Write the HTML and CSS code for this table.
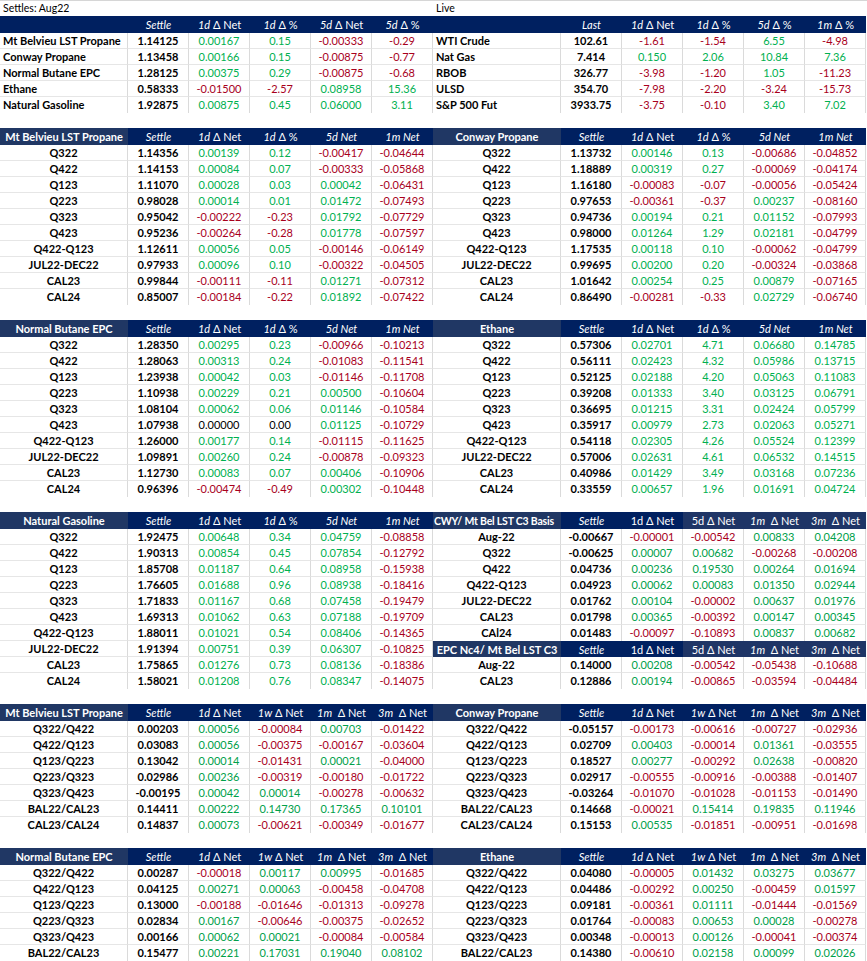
FILE: index.html
```html
<!DOCTYPE html>
<html lang="en">
<head>
<meta charset="utf-8">
<title>Settles</title>
<link rel="stylesheet" href="styles.css">
</head>
<body>
<div class="sheet">
  <div class="titles">
    <div class="title">Settles: Aug22</div>
    <div class="title">Live</div>
  </div>

  <div class="section">
    <table class="grid summary">
      <colgroup><col class="c-name"><col><col><col><col><col></colgroup>
      <thead><tr><th class="blank"></th><th><i>Settle</i></th><th><i>1d</i> Δ Net</th><th><i>1d</i> Δ %</th><th><i>5d</i> Δ Net</th><th><i>5d</i> Δ %</th></tr></thead>
      <tbody>
        <tr><td class="name">Mt Belvieu LST Propane</td><td class="s">1.14125</td><td class="g">0.00167</td><td class="g">0.15</td><td class="r">-0.00333</td><td class="r">-0.29</td></tr>
        <tr><td class="name">Conway Propane</td><td class="s">1.13458</td><td class="g">0.00166</td><td class="g">0.15</td><td class="r">-0.00875</td><td class="r">-0.77</td></tr>
        <tr><td class="name">Normal Butane EPC</td><td class="s">1.28125</td><td class="g">0.00375</td><td class="g">0.29</td><td class="r">-0.00875</td><td class="r">-0.68</td></tr>
        <tr><td class="name">Ethane</td><td class="s">0.58333</td><td class="r">-0.01500</td><td class="r">-2.57</td><td class="g">0.08958</td><td class="g">15.36</td></tr>
        <tr><td class="name">Natural Gasoline</td><td class="s">1.92875</td><td class="g">0.00875</td><td class="g">0.45</td><td class="g">0.06000</td><td class="g">3.11</td></tr>
      </tbody>
    </table>
    <table class="grid summary">
      <colgroup><col class="c-name"><col><col><col><col><col></colgroup>
      <thead><tr><th class="blank"></th><th><i>Last</i></th><th><i>1d</i> Δ Net</th><th><i>1d</i> Δ %</th><th><i>5d</i> Δ %</th><th><i>1m</i> Δ %</th></tr></thead>
      <tbody>
        <tr><td class="name">WTI Crude</td><td class="s">102.61</td><td class="r">-1.61</td><td class="r">-1.54</td><td class="g">6.55</td><td class="r">-4.98</td></tr>
        <tr><td class="name">Nat Gas</td><td class="s">7.414</td><td class="g">0.150</td><td class="g">2.06</td><td class="g">10.84</td><td class="g">7.36</td></tr>
        <tr><td class="name">RBOB</td><td class="s">326.77</td><td class="r">-3.98</td><td class="r">-1.20</td><td class="g">1.05</td><td class="r">-11.23</td></tr>
        <tr><td class="name">ULSD</td><td class="s">354.70</td><td class="r">-7.98</td><td class="r">-2.20</td><td class="r">-3.24</td><td class="r">-15.73</td></tr>
        <tr><td class="name">S&amp;P 500 Fut</td><td class="s">3933.75</td><td class="r">-3.75</td><td class="r">-0.10</td><td class="g">3.40</td><td class="g">7.02</td></tr>
      </tbody>
    </table>
  </div>

  <div class="section">
    <table class="grid">
      <colgroup><col class="c-name"><col><col><col><col><col></colgroup>
      <thead><tr><th class="lbl">Mt Belvieu LST Propane</th><th><i>Settle</i></th><th><i>1d</i> Δ Net</th><th><i>1d</i> Δ %</th><th><i>5d Net</i></th><th><i>1m Net</i></th></tr></thead>
      <tbody>
        <tr><td class="k">Q322</td><td class="s">1.14356</td><td class="g">0.00139</td><td class="g">0.12</td><td class="r">-0.00417</td><td class="r">-0.04644</td></tr>
        <tr><td class="k">Q422</td><td class="s">1.14153</td><td class="g">0.00084</td><td class="g">0.07</td><td class="r">-0.00333</td><td class="r">-0.05868</td></tr>
        <tr><td class="k">Q123</td><td class="s">1.11070</td><td class="g">0.00028</td><td class="g">0.03</td><td class="g">0.00042</td><td class="r">-0.06431</td></tr>
        <tr><td class="k">Q223</td><td class="s">0.98028</td><td class="g">0.00014</td><td class="g">0.01</td><td class="g">0.01472</td><td class="r">-0.07493</td></tr>
        <tr><td class="k">Q323</td><td class="s">0.95042</td><td class="r">-0.00222</td><td class="r">-0.23</td><td class="g">0.01792</td><td class="r">-0.07729</td></tr>
        <tr><td class="k">Q423</td><td class="s">0.95236</td><td class="r">-0.00264</td><td class="r">-0.28</td><td class="g">0.01778</td><td class="r">-0.07597</td></tr>
        <tr><td class="k">Q422-Q123</td><td class="s">1.12611</td><td class="g">0.00056</td><td class="g">0.05</td><td class="r">-0.00146</td><td class="r">-0.06149</td></tr>
        <tr><td class="k">JUL22-DEC22</td><td class="s">0.97933</td><td class="g">0.00096</td><td class="g">0.10</td><td class="r">-0.00322</td><td class="r">-0.04505</td></tr>
        <tr><td class="k">CAL23</td><td class="s">0.99844</td><td class="r">-0.00111</td><td class="r">-0.11</td><td class="g">0.01271</td><td class="r">-0.07312</td></tr>
        <tr><td class="k">CAL24</td><td class="s">0.85007</td><td class="r">-0.00184</td><td class="r">-0.22</td><td class="g">0.01892</td><td class="r">-0.07422</td></tr>
      </tbody>
    </table>
    <table class="grid">
      <colgroup><col class="c-name"><col><col><col><col><col></colgroup>
      <thead><tr><th class="lbl">Conway Propane</th><th><i>Settle</i></th><th><i>1d</i> Δ Net</th><th><i>1d</i> Δ %</th><th><i>5d Net</i></th><th><i>1m Net</i></th></tr></thead>
      <tbody>
        <tr><td class="k">Q322</td><td class="s">1.13732</td><td class="g">0.00146</td><td class="g">0.13</td><td class="r">-0.00686</td><td class="r">-0.04852</td></tr>
        <tr><td class="k">Q422</td><td class="s">1.18889</td><td class="g">0.00319</td><td class="g">0.27</td><td class="r">-0.00069</td><td class="r">-0.04174</td></tr>
        <tr><td class="k">Q123</td><td class="s">1.16180</td><td class="r">-0.00083</td><td class="r">-0.07</td><td class="r">-0.00056</td><td class="r">-0.05424</td></tr>
        <tr><td class="k">Q223</td><td class="s">0.97653</td><td class="r">-0.00361</td><td class="r">-0.37</td><td class="g">0.00237</td><td class="r">-0.08160</td></tr>
        <tr><td class="k">Q323</td><td class="s">0.94736</td><td class="g">0.00194</td><td class="g">0.21</td><td class="g">0.01152</td><td class="r">-0.07993</td></tr>
        <tr><td class="k">Q423</td><td class="s">0.98000</td><td class="g">0.01264</td><td class="g">1.29</td><td class="g">0.02181</td><td class="r">-0.04799</td></tr>
        <tr><td class="k">Q422-Q123</td><td class="s">1.17535</td><td class="g">0.00118</td><td class="g">0.10</td><td class="r">-0.00062</td><td class="r">-0.04799</td></tr>
        <tr><td class="k">JUL22-DEC22</td><td class="s">0.99695</td><td class="g">0.00200</td><td class="g">0.20</td><td class="r">-0.00324</td><td class="r">-0.03868</td></tr>
        <tr><td class="k">CAL23</td><td class="s">1.01642</td><td class="g">0.00254</td><td class="g">0.25</td><td class="g">0.00879</td><td class="r">-0.07165</td></tr>
        <tr><td class="k">CAL24</td><td class="s">0.86490</td><td class="r">-0.00281</td><td class="r">-0.33</td><td class="g">0.02729</td><td class="r">-0.06740</td></tr>
      </tbody>
    </table>
  </div>

  <div class="section">
    <table class="grid">
      <colgroup><col class="c-name"><col><col><col><col><col></colgroup>
      <thead><tr><th class="lbl">Normal Butane EPC</th><th><i>Settle</i></th><th><i>1d</i> Δ Net</th><th><i>1d</i> Δ %</th><th><i>5d Net</i></th><th><i>1m Net</i></th></tr></thead>
      <tbody>
        <tr><td class="k">Q322</td><td class="s">1.28350</td><td class="g">0.00295</td><td class="g">0.23</td><td class="r">-0.00966</td><td class="r">-0.10213</td></tr>
        <tr><td class="k">Q422</td><td class="s">1.28063</td><td class="g">0.00313</td><td class="g">0.24</td><td class="r">-0.01083</td><td class="r">-0.11541</td></tr>
        <tr><td class="k">Q123</td><td class="s">1.23938</td><td class="g">0.00042</td><td class="g">0.03</td><td class="r">-0.01146</td><td class="r">-0.11708</td></tr>
        <tr><td class="k">Q223</td><td class="s">1.10938</td><td class="g">0.00229</td><td class="g">0.21</td><td class="g">0.00500</td><td class="r">-0.10604</td></tr>
        <tr><td class="k">Q323</td><td class="s">1.08104</td><td class="g">0.00062</td><td class="g">0.06</td><td class="g">0.01146</td><td class="r">-0.10584</td></tr>
        <tr><td class="k">Q423</td><td class="s">1.07938</td><td class="z">0.00000</td><td class="z">0.00</td><td class="g">0.01125</td><td class="r">-0.10729</td></tr>
        <tr><td class="k">Q422-Q123</td><td class="s">1.26000</td><td class="g">0.00177</td><td class="g">0.14</td><td class="r">-0.01115</td><td class="r">-0.11625</td></tr>
        <tr><td class="k">JUL22-DEC22</td><td class="s">1.09891</td><td class="g">0.00260</td><td class="g">0.24</td><td class="r">-0.00878</td><td class="r">-0.09323</td></tr>
        <tr><td class="k">CAL23</td><td class="s">1.12730</td><td class="g">0.00083</td><td class="g">0.07</td><td class="g">0.00406</td><td class="r">-0.10906</td></tr>
        <tr><td class="k">CAL24</td><td class="s">0.96396</td><td class="r">-0.00474</td><td class="r">-0.49</td><td class="g">0.00302</td><td class="r">-0.10448</td></tr>
      </tbody>
    </table>
    <table class="grid">
      <colgroup><col class="c-name"><col><col><col><col><col></colgroup>
      <thead><tr><th class="lbl">Ethane</th><th><i>Settle</i></th><th><i>1d</i> Δ Net</th><th><i>1d</i> Δ %</th><th><i>5d Net</i></th><th><i>1m Net</i></th></tr></thead>
      <tbody>
        <tr><td class="k">Q322</td><td class="s">0.57306</td><td class="g">0.02701</td><td class="g">4.71</td><td class="g">0.06680</td><td class="g">0.14785</td></tr>
        <tr><td class="k">Q422</td><td class="s">0.56111</td><td class="g">0.02423</td><td class="g">4.32</td><td class="g">0.05986</td><td class="g">0.13715</td></tr>
        <tr><td class="k">Q123</td><td class="s">0.52125</td><td class="g">0.02188</td><td class="g">4.20</td><td class="g">0.05063</td><td class="g">0.11083</td></tr>
        <tr><td class="k">Q223</td><td class="s">0.39208</td><td class="g">0.01333</td><td class="g">3.40</td><td class="g">0.03125</td><td class="g">0.06791</td></tr>
        <tr><td class="k">Q323</td><td class="s">0.36695</td><td class="g">0.01215</td><td class="g">3.31</td><td class="g">0.02424</td><td class="g">0.05799</td></tr>
        <tr><td class="k">Q423</td><td class="s">0.35917</td><td class="g">0.00979</td><td class="g">2.73</td><td class="g">0.02063</td><td class="g">0.05271</td></tr>
        <tr><td class="k">Q422-Q123</td><td class="s">0.54118</td><td class="g">0.02305</td><td class="g">4.26</td><td class="g">0.05524</td><td class="g">0.12399</td></tr>
        <tr><td class="k">JUL22-DEC22</td><td class="s">0.57006</td><td class="g">0.02631</td><td class="g">4.61</td><td class="g">0.06532</td><td class="g">0.14515</td></tr>
        <tr><td class="k">CAL23</td><td class="s">0.40986</td><td class="g">0.01429</td><td class="g">3.49</td><td class="g">0.03168</td><td class="g">0.07236</td></tr>
        <tr><td class="k">CAL24</td><td class="s">0.33559</td><td class="g">0.00657</td><td class="g">1.96</td><td class="g">0.01691</td><td class="g">0.04724</td></tr>
      </tbody>
    </table>
  </div>

  <div class="section">
    <table class="grid">
      <colgroup><col class="c-name"><col><col><col><col><col></colgroup>
      <thead><tr><th class="lbl">Natural Gasoline</th><th><i>Settle</i></th><th><i>1d</i> Δ Net</th><th><i>1d</i> Δ %</th><th><i>5d Net</i></th><th><i>1m Net</i></th></tr></thead>
      <tbody>
        <tr><td class="k">Q322</td><td class="s">1.92475</td><td class="g">0.00648</td><td class="g">0.34</td><td class="g">0.04759</td><td class="r">-0.08858</td></tr>
        <tr><td class="k">Q422</td><td class="s">1.90313</td><td class="g">0.00854</td><td class="g">0.45</td><td class="g">0.07854</td><td class="r">-0.12792</td></tr>
        <tr><td class="k">Q123</td><td class="s">1.85708</td><td class="g">0.01187</td><td class="g">0.64</td><td class="g">0.08958</td><td class="r">-0.15938</td></tr>
        <tr><td class="k">Q223</td><td class="s">1.76605</td><td class="g">0.01688</td><td class="g">0.96</td><td class="g">0.08938</td><td class="r">-0.18416</td></tr>
        <tr><td class="k">Q323</td><td class="s">1.71833</td><td class="g">0.01167</td><td class="g">0.68</td><td class="g">0.07458</td><td class="r">-0.19479</td></tr>
        <tr><td class="k">Q423</td><td class="s">1.69313</td><td class="g">0.01062</td><td class="g">0.63</td><td class="g">0.07188</td><td class="r">-0.19709</td></tr>
        <tr><td class="k">Q422-Q123</td><td class="s">1.88011</td><td class="g">0.01021</td><td class="g">0.54</td><td class="g">0.08406</td><td class="r">-0.14365</td></tr>
        <tr><td class="k">JUL22-DEC22</td><td class="s">1.91394</td><td class="g">0.00751</td><td class="g">0.39</td><td class="g">0.06307</td><td class="r">-0.10825</td></tr>
        <tr><td class="k">CAL23</td><td class="s">1.75865</td><td class="g">0.01276</td><td class="g">0.73</td><td class="g">0.08136</td><td class="r">-0.18386</td></tr>
        <tr><td class="k">CAL24</td><td class="s">1.58021</td><td class="g">0.01208</td><td class="g">0.76</td><td class="g">0.08347</td><td class="r">-0.14075</td></tr>
      </tbody>
    </table>
    <div class="stack">
      <table class="grid dark">
        <colgroup><col class="c-name"><col><col><col><col><col></colgroup>
        <thead><tr><th class="lbl left">CWY/ Mt Bel LST C3 Basis</th><th><i>Settle</i></th><th>1d Δ Net</th><th class="alt">5d Δ Net</th><th class="alt"><i>1m</i>&nbsp; Δ Net</th><th class="alt"><i>3m</i>&nbsp; Δ Net</th></tr></thead>
        <tbody>
          <tr><td class="k">Aug-22</td><td class="s">-0.00667</td><td class="r">-0.00001</td><td class="r">-0.00542</td><td class="g">0.00833</td><td class="g">0.04208</td></tr>
          <tr><td class="k">Q322</td><td class="s">-0.00625</td><td class="g">0.00007</td><td class="g">0.00682</td><td class="r">-0.00268</td><td class="r">-0.00208</td></tr>
          <tr><td class="k">Q422</td><td class="s">0.04736</td><td class="g">0.00236</td><td class="g">0.19530</td><td class="g">0.00264</td><td class="g">0.01694</td></tr>
          <tr><td class="k">Q422-Q123</td><td class="s">0.04923</td><td class="g">0.00062</td><td class="g">0.00083</td><td class="g">0.01350</td><td class="g">0.02944</td></tr>
          <tr><td class="k">JUL22-DEC22</td><td class="s">0.01762</td><td class="g">0.00104</td><td class="r">-0.00002</td><td class="g">0.00637</td><td class="g">0.01976</td></tr>
          <tr><td class="k">CAL23</td><td class="s">0.01798</td><td class="g">0.00365</td><td class="r">-0.00392</td><td class="g">0.00147</td><td class="g">0.00345</td></tr>
          <tr><td class="k">CAl24</td><td class="s">0.01483</td><td class="r">-0.00097</td><td class="r">-0.10893</td><td class="g">0.00837</td><td class="g">0.00682</td></tr>
        </tbody>
      </table>
      <table class="grid dark sub">
        <colgroup><col class="c-name"><col><col><col><col><col></colgroup>
        <thead><tr><th class="lbl">EPC Nc4/ Mt Bel LST C3</th><th><i>Settle</i></th><th>1d Δ Net</th><th class="alt">5d Δ Net</th><th class="alt"><i>1m</i>&nbsp; Δ Net</th><th class="alt"><i>3m</i>&nbsp; Δ Net</th></tr></thead>
        <tbody>
          <tr><td class="k">Aug-22</td><td class="s">0.14000</td><td class="g">0.00208</td><td class="r">-0.00542</td><td class="r">-0.05438</td><td class="r">-0.10688</td></tr>
          <tr><td class="k">CAL23</td><td class="s">0.12886</td><td class="g">0.00194</td><td class="r">-0.00865</td><td class="r">-0.03594</td><td class="r">-0.04484</td></tr>
        </tbody>
      </table>
    </div>
  </div>

  <div class="section">
    <table class="grid dark">
      <colgroup><col class="c-name"><col><col><col><col><col></colgroup>
      <thead><tr><th class="lbl">Mt Belvieu LST Propane</th><th><i>Settle</i></th><th><i>1d</i> Δ Net</th><th><i>1w</i> Δ Net</th><th><i>1m</i>&nbsp; Δ Net</th><th><i>3m</i>&nbsp; Δ Net</th></tr></thead>
      <tbody>
        <tr><td class="k">Q322/Q422</td><td class="s">0.00203</td><td class="g">0.00056</td><td class="r">-0.00084</td><td class="g">0.00703</td><td class="r">-0.01422</td></tr>
        <tr><td class="k">Q422/Q123</td><td class="s">0.03083</td><td class="g">0.00056</td><td class="r">-0.00375</td><td class="r">-0.00167</td><td class="r">-0.03604</td></tr>
        <tr><td class="k">Q123/Q223</td><td class="s">0.13042</td><td class="g">0.00014</td><td class="r">-0.01431</td><td class="g">0.00021</td><td class="r">-0.04000</td></tr>
        <tr><td class="k">Q223/Q323</td><td class="s">0.02986</td><td class="g">0.00236</td><td class="r">-0.00319</td><td class="r">-0.00180</td><td class="r">-0.01722</td></tr>
        <tr><td class="k">Q323/Q423</td><td class="s">-0.00195</td><td class="g">0.00042</td><td class="g">0.00014</td><td class="r">-0.00278</td><td class="r">-0.00632</td></tr>
        <tr><td class="k">BAL22/CAL23</td><td class="s">0.14411</td><td class="g">0.00222</td><td class="g">0.14730</td><td class="g">0.17365</td><td class="g">0.10101</td></tr>
        <tr><td class="k">CAL23/CAL24</td><td class="s">0.14837</td><td class="g">0.00073</td><td class="r">-0.00621</td><td class="r">-0.00349</td><td class="r">-0.01677</td></tr>
      </tbody>
    </table>
    <table class="grid dark">
      <colgroup><col class="c-name"><col><col><col><col><col></colgroup>
      <thead><tr><th class="lbl">Conway Propane</th><th><i>Settle</i></th><th><i>1d</i> Δ Net</th><th><i>1w</i> Δ Net</th><th><i>1m</i>&nbsp; Δ Net</th><th><i>3m</i>&nbsp; Δ Net</th></tr></thead>
      <tbody>
        <tr><td class="k">Q322/Q422</td><td class="s">-0.05157</td><td class="r">-0.00173</td><td class="r">-0.00616</td><td class="r">-0.00727</td><td class="r">-0.02936</td></tr>
        <tr><td class="k">Q422/Q123</td><td class="s">0.02709</td><td class="g">0.00403</td><td class="r">-0.00014</td><td class="g">0.01361</td><td class="r">-0.03555</td></tr>
        <tr><td class="k">Q123/Q223</td><td class="s">0.18527</td><td class="g">0.00277</td><td class="r">-0.00292</td><td class="g">0.02638</td><td class="r">-0.00820</td></tr>
        <tr><td class="k">Q223/Q323</td><td class="s">0.02917</td><td class="r">-0.00555</td><td class="r">-0.00916</td><td class="r">-0.00388</td><td class="r">-0.01407</td></tr>
        <tr><td class="k">Q323/Q423</td><td class="s">-0.03264</td><td class="r">-0.01070</td><td class="r">-0.01028</td><td class="r">-0.01153</td><td class="r">-0.01490</td></tr>
        <tr><td class="k">BAL22/CAL23</td><td class="s">0.14668</td><td class="r">-0.00021</td><td class="g">0.15414</td><td class="g">0.19835</td><td class="g">0.11946</td></tr>
        <tr><td class="k">CAL23/CAL24</td><td class="s">0.15153</td><td class="g">0.00535</td><td class="r">-0.01851</td><td class="r">-0.00951</td><td class="r">-0.01698</td></tr>
      </tbody>
    </table>
  </div>

  <div class="section last">
    <table class="grid dark">
      <colgroup><col class="c-name"><col><col><col><col><col></colgroup>
      <thead><tr><th class="lbl">Normal Butane EPC</th><th><i>Settle</i></th><th><i>1d</i> Δ Net</th><th><i>1w</i> Δ Net</th><th><i>1m</i>&nbsp; Δ Net</th><th><i>3m</i>&nbsp; Δ Net</th></tr></thead>
      <tbody>
        <tr><td class="k">Q322/Q422</td><td class="s">0.00287</td><td class="r">-0.00018</td><td class="g">0.00117</td><td class="g">0.00995</td><td class="r">-0.01685</td></tr>
        <tr><td class="k">Q422/Q123</td><td class="s">0.04125</td><td class="g">0.00271</td><td class="g">0.00063</td><td class="r">-0.00458</td><td class="r">-0.04708</td></tr>
        <tr><td class="k">Q123/Q223</td><td class="s">0.13000</td><td class="r">-0.00188</td><td class="r">-0.01646</td><td class="r">-0.01313</td><td class="r">-0.09278</td></tr>
        <tr><td class="k">Q223/Q323</td><td class="s">0.02834</td><td class="g">0.00167</td><td class="r">-0.00646</td><td class="r">-0.00375</td><td class="r">-0.02652</td></tr>
        <tr><td class="k">Q323/Q423</td><td class="s">0.00166</td><td class="g">0.00062</td><td class="g">0.00021</td><td class="r">-0.00084</td><td class="r">-0.00584</td></tr>
        <tr><td class="k">BAL22/CAL23</td><td class="s">0.15477</td><td class="g">0.00221</td><td class="g">0.17031</td><td class="g">0.19040</td><td class="g">0.08102</td></tr>
      </tbody>
    </table>
    <table class="grid dark">
      <colgroup><col class="c-name"><col><col><col><col><col></colgroup>
      <thead><tr><th class="lbl">Ethane</th><th><i>Settle</i></th><th><i>1d</i> Δ Net</th><th><i>1w</i> Δ Net</th><th><i>1m</i>&nbsp; Δ Net</th><th><i>3m</i>&nbsp; Δ Net</th></tr></thead>
      <tbody>
        <tr><td class="k">Q322/Q422</td><td class="s">0.04080</td><td class="r">-0.00005</td><td class="g">0.01432</td><td class="g">0.03275</td><td class="g">0.03677</td></tr>
        <tr><td class="k">Q422/Q123</td><td class="s">0.04486</td><td class="r">-0.00292</td><td class="g">0.00250</td><td class="r">-0.00459</td><td class="g">0.01597</td></tr>
        <tr><td class="k">Q123/Q223</td><td class="s">0.09181</td><td class="r">-0.00361</td><td class="g">0.01111</td><td class="r">-0.01444</td><td class="r">-0.01569</td></tr>
        <tr><td class="k">Q223/Q323</td><td class="s">0.01764</td><td class="r">-0.00083</td><td class="g">0.00653</td><td class="g">0.00028</td><td class="r">-0.00278</td></tr>
        <tr><td class="k">Q323/Q423</td><td class="s">0.00348</td><td class="r">-0.00013</td><td class="g">0.00126</td><td class="r">-0.00041</td><td class="r">-0.00374</td></tr>
        <tr><td class="k">BAL22/CAL23</td><td class="s">0.14380</td><td class="r">-0.00610</td><td class="g">0.02158</td><td class="g">0.00099</td><td class="g">0.02026</td></tr>
      </tbody>
    </table>
  </div>
</div>
</body>
</html>
```

FILE: styles.css
```css
* { box-sizing: border-box; }

html, body {
  margin: 0;
  padding: 0;
  background: #ffffff;
}

body {
  font-family: Lato, "Liberation Sans", sans-serif;
  font-size: 11px;
  color: #000000;
}

.sheet {
  width: 867px;
}

.titles {
  display: flex;
  height: 16px;
  border-top: 1px solid #d6d6d6;
}

.title {
  width: 433px;
  padding-left: 3px;
  line-height: 15px;
  font-size: 10.5px;
}

.section {
  display: flex;
  align-items: flex-start;
  margin-bottom: 15px;
}

.section.last {
  margin-bottom: 0;
}

.stack {
  display: flex;
  flex-direction: column;
  width: 433px;
}

.grid {
  width: 433px;
  table-layout: fixed;
  border-collapse: separate;
  border-spacing: 0;
}

.grid col { width: 61px; }
.grid col.c-name { width: 128px; }

.grid th {
  height: 17px;
  padding: 0;
  background: #002060;
  color: #ffffff;
  font-weight: normal;
  text-align: center;
  white-space: nowrap;
  overflow: hidden;
  line-height: 16px;
  font-size: 11px;
}

.grid.sub th { height: 16px; line-height: 15px; }

.grid th i { font-style: italic; }

.grid th.lbl {
  background: #203764;
  font-weight: bold;
  font-size: 11px;
}

.grid th.lbl.left {
  text-align: left;
  padding-left: 1px;
  font-size: 10.5px;
  letter-spacing: -0.2px;
}

.grid th.alt { background: #1f3566; }

.grid td {
  height: 16px;
  padding: 0;
  text-align: center;
  white-space: nowrap;
  overflow: hidden;
  line-height: 15px;
  border-right: 1px solid #dadada;
  border-bottom: 1px solid #e6e6e6;
  font-size: 11px;
}

.grid tbody tr:last-child td { border-bottom: 0; line-height: 16px; }

.grid td.name {
  text-align: left;
  padding-left: 3px;
  font-weight: bold;
  font-size: 11px;
}

.grid td.k { font-weight: bold; }
.grid td.s { font-weight: bold; color: #000000; }
.grid td.z { color: #000000; }
.grid td.g { color: #00b050; }
.grid td.r { color: #a8001c; }

.grid.dark td.g { color: #00a04a; }
```
